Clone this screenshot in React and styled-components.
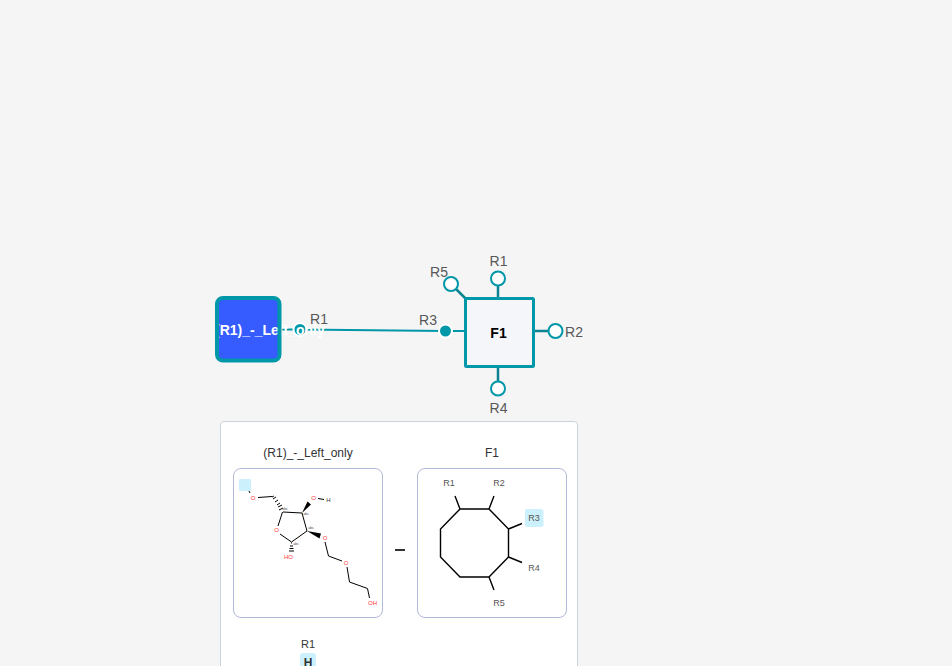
import React from "react";
import styled, { createGlobalStyle } from "styled-components";

const GlobalStyle = createGlobalStyle`
  * { box-sizing: border-box; }
  html, body, #root { height: 100%; }
  body {
    margin: 0;
    background: #f5f5f5;
    color: #333;
    font-family: "Liberation Sans", Arial, sans-serif;
  }
`;

const Canvas = styled.main`
  position: relative;
  width: 100%;
  height: 100%;
  overflow: hidden;
  background: #f5f5f5;
`;

const Graph = styled.svg`
  display: block;
  width: 100%;
  height: 100%;
`;

const Label = styled.text`
  font-size: 14px;
  fill: #585858;
  text-anchor: middle;
`;

const NodeLabel = styled.text`
  font-size: 14px;
  font-weight: 700;
  fill: ${(p) => p.$color};
  text-anchor: ${(p) => p.$anchor || "middle"};
`;

const Link = styled.line`
  stroke: ${(p) => (p.$free ? "#0b8390" : "#0097a8")};
  stroke-width: ${(p) => (p.$free ? "2.5px" : "2px")};
`;

const Port = styled.circle`
  fill: ${(p) => (p.$used ? "#0097a8" : "#fff")};
  stroke: ${(p) => (p.$used ? "#fff" : "#0097a8")};
  stroke-width: 2px;
`;

const Preview = styled.section`
  position: absolute;
  left: 220px;
  top: 421px;
  width: 358px;
  padding: 24px 10px 24px 12px;
  background: #fff;
  border: 1px solid #cad3dd;
  border-radius: 4px;
`;

const Monomers = styled.div`
  display: flex;
  align-items: flex-start;
`;

const Monomer = styled.figure`
  display: flex;
  flex-direction: column;
  align-items: center;
  width: 150px;
  margin: 0;
`;

const Name = styled.figcaption`
  margin-bottom: 8px;
  font-size: 12px;
  line-height: 14px;
`;

const Frame = styled.div`
  width: 150px;
  height: 150px;
  border: 1px solid #b4b8d8;
  border-radius: 8px;
`;

const Structure = styled.svg`
  display: block;
  width: 100%;
  height: 100%;
`;

const Bond = styled.path`
  fill: none;
  stroke: #000;
  stroke-width: ${(p) => p.$width || 1}px;
`;

const Atom = styled.text`
  font-size: ${(p) => p.$size || 6}px;
  fill: ${(p) => p.$color || "#f33"};
  text-anchor: middle;
`;

const Connector = styled.div`
  width: 34px;
  padding-top: 103px;
  display: flex;
  justify-content: center;

  &::before {
    content: "";
    width: 10px;
    height: 2px;
    background: #333;
  }
`;

const LeavingGroup = styled.div`
  display: flex;
  flex-direction: column;
  align-items: center;
  width: 150px;
  margin-top: 19px;
  font-size: 11px;
  line-height: 14px;
`;

const Group = styled.strong`
  margin-top: 2px;
  padding: 2px 4px;
  background: #cdf1fc;
  border-radius: 3px;
  font-size: 12px;
  line-height: 16px;
`;

const ports = [
  { name: "R1", x: 498, y: 278.5, from: [498, 298], label: [498.5, 266] },
  { name: "R2", x: 555.5, y: 331, from: [534, 331], label: [574, 337] },
  { name: "R4", x: 498, y: 388.5, from: [498, 368], label: [498.5, 413] },
  { name: "R5", x: 451, y: 284, from: [467, 300], label: [439, 277] },
];

const stereo = [[285, 510], [306, 515], [311, 529], [296, 545]];

const groups = [
  ["R1", 449, 486],
  ["R2", 499, 486],
  ["R3", 534, 521],
  ["R4", 534, 571],
  ["R5", 499, 606],
];

function MoleculeGraph() {
  return (
    <Graph aria-label="Molecule connections">
      <rect x="216.5" y="297.5" width="63" height="63" rx="7" fill="#365cff" />
      <Link x1="281" y1="329.5" x2="293" y2="329.5" />
      <Link x1="300" y1="329.5" x2="445" y2="331" />
      <Link x1="445" y1="331" x2="466" y2="331" />
      <Port cx="300" cy="329.5" r="6.5" $used />
      <NodeLabel x="215" y="335" $color="#fff" $anchor="start">(R1)_-_Left_only</NodeLabel>
      <rect x="217" y="298" width="62.500" height="62.500" rx="6" fill="none" stroke="#0097a8" strokeWidth="4" />
      <Label x="319" y="324">R1</Label>

      {ports.map((p) => (
        <g key={p.name}>
          <Link x1={p.from[0]} y1={p.from[1]} x2={p.x} y2={p.y} $free />
          <Port cx={p.x} cy={p.y} r="7" />
          <Label x={p.label[0]} y={p.label[1]}>{p.name}</Label>
        </g>
      ))}
      <Port cx="445.5" cy="331" r="6.5" $used />
      <Label x="428" y="325">R3</Label>
      <rect x="465.5" y="298.5" width="68" height="68" rx="1" fill="#f5f6f9" stroke="#0097a8" strokeWidth="3" />
      <NodeLabel x="498.5" y="338" $color="#000">F1</NodeLabel>
    </Graph>
  );
}

function LeftStructure() {
  return (
    <Structure viewBox="234 469 148 148" role="img" aria-label="(R1)_-_Left_only structure">
      <rect x="239" y="479" width="12" height="12" rx="1" fill="#cdf1fc" />
      <Bond d="M249 491l1 2M258 497.5L272 496.5M282.500 512L278 526M283 512L302 513L307 531L291.500 542L280 534M325 542L328.500 556L342 561M347 567L349.500 582L367.500 588.500L369.500 598M318 498.500L324 499.500" />
      <path d="M302 513L307.500 501.500L311 504.500ZM307 531L321 533.500L319.500 538.500Z" />
      <path d="M272 497l2-1M273 499l3-2M275 502l3-2M277 505l3-2M278 507l4-2M279 510l4-2M291 543h1M290 546h3M289.500 548.500h4M289 551h5" stroke="#000" strokeWidth="1" fill="none" />
      <Atom x="253" y="500">O</Atom>
      <Atom x="313.500" y="500">O</Atom>
      <Atom x="328.500" y="502" $color="#333">H</Atom>
      <Atom x="276.500" y="532">O</Atom>
      <Atom x="325" y="540">O</Atom>
      <Atom x="346" y="565">O</Atom>
      <Atom x="288.500" y="559">HO</Atom>
      <Atom x="372.500" y="605">OH</Atom>
      {stereo.map(([x, y]) => (
        <Atom key={x} x={x} y={y} $size={3} $color="#333">abs</Atom>
      ))}
    </Structure>
  );
}

function RingStructure() {
  return (
    <Structure viewBox="418 469 148 148" role="img" aria-label="F1 structure">
      <rect x="525" y="509" width="18.500" height="18" rx="2" fill="#cdf1fc" />
      <Bond
        $width={1.4}
        d="M460 509H489L508.500 529V557L489 577H460L440.500 557V529ZM460 509L455 496M489 509L494 496M508.500 529L522 523.500M508.500 557L522 562.500M489 577L494 590"
      />
      {groups.map(([name, x, y]) => (
        <Atom key={name} x={x} y={y} $size={9} $color="#555">{name}</Atom>
      ))}
    </Structure>
  );
}

export default function App() {
  return (
    <>
      <GlobalStyle />
      <Canvas>
        <MoleculeGraph />
        <Preview>
          <Monomers>
            <Monomer>
              <Name>(R1)_-_Left_only</Name>
              <Frame><LeftStructure /></Frame>
            </Monomer>
            <Connector />
            <Monomer>
              <Name>F1</Name>
              <Frame><RingStructure /></Frame>
            </Monomer>
          </Monomers>
          <LeavingGroup>
            R1
            <Group>H</Group>
          </LeavingGroup>
        </Preview>
      </Canvas>
    </>
  );
}
